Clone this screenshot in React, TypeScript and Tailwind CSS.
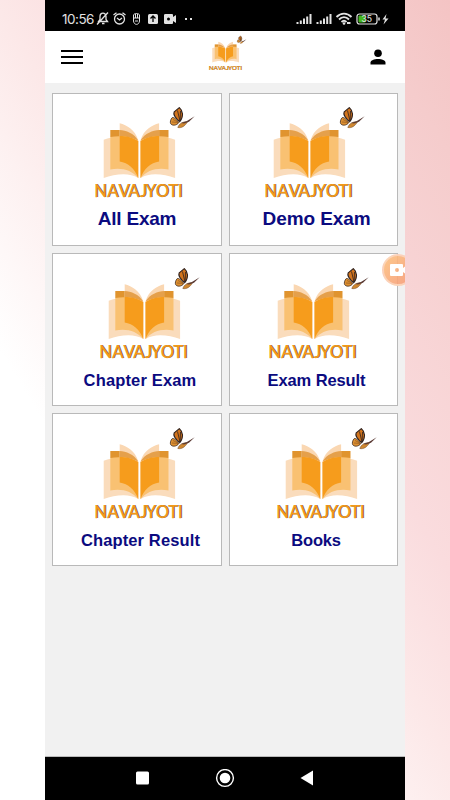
import clsx from "clsx";

type Exam = {
  label: string;
  // horizontal offset of the logo and text styling differ per tile
  logo: string;
  text: string;
};

const exams: Exam[] = [
  { label: "All Exam", logo: "ml-[42px] mt-[11px]", text: "ml-[44px] mt-[6px] text-[19px] w-[80px] tracking-[-0.2px]" },
  { label: "Demo Exam", logo: "ml-[35px] mt-[11px]", text: "ml-[33px] mt-[6px] text-[19px] w-[108px] tracking-[-0.1px]" },
  { label: "Chapter Exam", logo: "ml-[47px] mt-[12px]", text: "ml-[30px] mt-[6px] text-[16.5px] w-[114px] tracking-[0.15px]" },
  { label: "Exam Result", logo: "ml-[39px] mt-[12px]", text: "ml-[37px] mt-[6px] text-[16.5px] w-[100px] tracking-[-0.1px]" },
  { label: "Chapter Result", logo: "ml-[42px] mt-[12px]", text: "ml-[27px] mt-[6px] text-[16.5px] w-[121px] tracking-[0.12px]" },
  { label: "Books", logo: "ml-[47px] mt-[12px]", text: "ml-[61px] mt-[6px] text-[16.5px] w-[51px] tracking-[-0.2px]" },
];

function BookSide() {
  return (
    <>
      <path d="M24.700 18.300C32 20 40 25 43.200 35L43.200 73C40 64 32 57 24.700 56.700Z" fill="#fad7b2" />
      <path d="M8.700 34.700C18 31 33 30 43.200 36L43.200 73C34 67 20 69 8.700 73Z" fill="#fadcbc" />
      <path d="M15.300 25H24.700V32H15.300Z" fill="#e0942f" />
      <path d="M24.700 25C31 25.500 39 28 43.200 35.500C36 32 30 31 24.700 31.500Z" fill="#e5a04b" />
      <path d="M15.300 32C25 30 36 31.500 43.200 36V73C37 65 26 62 15.300 64.500Z" fill="#f9c172" />
      <path d="M24.700 31C31 31 37 32 43.200 36V73C40 64 33 57.500 24.700 56.500Z" fill="#f69c1c" />
    </>
  );
}

function Butterfly() {
  return (
    <g strokeLinejoin="round">
      <path
        d="M84.800 16.500C80 13 78.200 9 79.200 6.800L84.300 2.600L86.300 5L87.500 9C87.500 12 86.700 14.500 84.800 16.500Z"
        fill="#d2741c"
        stroke="#2d211f"
        strokeWidth="1.100"
      />
      <path d="M82.500 5.500L85 16M85.500 6L85.200 15" stroke="#2d211f" strokeWidth=".8" />
      <path
        d="M84 17.500C80.500 13 78 11.800 77 12.800C75.500 14.500 75 17.200 75.600 18.500C77 21 81.500 20.800 84 17.500Z"
        fill="#dd8f30"
        stroke="#3b2920"
        strokeWidth=".8"
      />
      <path d="M77 17L84 17.500M78 14.500L83 17" stroke="#6f431f" strokeWidth=".5" />
      <path d="M82.800 22.500C84 18.500 88 16.500 92.500 16.700C90.500 20.500 87 23.500 82.800 22.500Z" fill="#d08830" stroke="#6b4527" strokeWidth=".5" />
      <path d="M86 18L91.500 16.300L99.700 11.300L94 16.700L89 18.500Z" fill="#5a3a34" />
    </g>
  );
}

function Logo({ className }: { className?: string }) {
  // each letter of the wordmark is kerned by hand
  const letters = "-0.8 12.2 23.400 33.200 45 50.700 60.700 73.300 83";
  return (
    <svg viewBox="0 0 104 96" className={className}>
      <BookSide />
      <g transform="translate(88.8 0) scale(-1 1)">
        <BookSide />
      </g>
      <Butterfly />
      <g fontFamily="Lato, sans-serif" fontSize="16.5">
        <text x={letters} y="92.300" transform="translate(.8 0)" fill="#4d3a22">NAVAJYOTI</text>
        <text x={letters} y="92" fill="#f39a19" stroke="#f39a19" strokeWidth=".25">NAVAJYOTI</text>
      </g>
    </svg>
  );
}

function ExamCard({ label, logo, text }: Exam) {
  return (
    <button className="flex h-[153px] flex-col items-start border border-[#b9b9b9] bg-white">
      <Logo className={clsx("h-24 w-[104px] shrink-0 overflow-visible", logo)} />
      <span
        className={clsx(
          "flex h-6 items-center justify-center font-bold whitespace-nowrap text-[#0b0b80]",
          text,
        )}
      >
        {label}
      </span>
    </button>
  );
}

function StatusBar() {
  return (
    <div className="flex h-[31px] bg-black pt-[11px] text-[#e2e2e2]">
      <span className="ml-[17px] w-[34px] font-[Inter] text-[13.5px] leading-4 tracking-[-0.5px]">10:56</span>
      <svg width="102" height="16" fill="none" stroke="currentColor" strokeWidth="1.3">
        {/* muted bell */}
        <path d="M2.500 10.500H11.500L10 8.500V5.500C10 1 4 1 4 5.500V8.500ZM6 12.500H8.500M1 13.500L12 1.500" />
        {/* alarm */}
        <circle cx="23.500" cy="8" r="5" />
        <path d="M17.500 4L20.500 1.700M29.500 4L26.500 1.700M21 7L23.500 9L26 7" />
        {/* touch */}
        <path d="M37.500 7V4C38 2 43 2 43.500 4V10C43 14.500 38 14.500 37.500 10V7H43.500M39.500 3V7M41.500 3V7M39 10H42" strokeWidth="1" />
        <rect x="52" y="3" width="10" height="10" rx="1.500" fill="currentColor" stroke="none" />
        <path d="M57 11V5.500M54.500 7.500L57 5L59.500 7.500" stroke="#000" />
        <path d="M69.500 3H76Q77 3 77 4V6L80 4V12L77 10V12Q77 13 76 13H69.500Q68 13 68 12V4Q68 3 69.500 3" fill="currentColor" stroke="none" />
        <circle cx="72.500" cy="8" r="1.500" fill="#000" stroke="none" />
        <path d="M89 8H91M94 8H96" strokeWidth="2" />
      </svg>
      <svg width="95" height="16" className="ml-[98px]" fill="none" stroke="currentColor">
        <path d="M1.500 13V11M4.800 13V9.500M8 13V7.500M11.200 13V5.500M14.500 13V3" strokeWidth="2" />
        <path d="M21.500 13V11M24.800 13V9.500M28 13V7.500M31.200 13V5.500M34.500 13V3" strokeWidth="2" />
        <path d="M40.500 6C45 1.500 51 1.500 55.500 6M43 8.500C46 5.500 50 5.500 53 8.500M45.500 11C47 9.500 49 9.500 50.500 11" strokeWidth="1.900" />
        <circle cx="48" cy="12.500" r="1.300" fill="currentColor" stroke="none" />
        <path d="M51 12H54.500" strokeWidth="2" />
        <rect x="61" y="3" width="20" height="10" rx="2.500" strokeWidth="1.200" />
        <rect x="62.500" y="4.500" width="7" height="7" rx="1" fill="#43b71d" stroke="none" />
        <path d="M83 6.500V9.500" strokeWidth="1.500" />
        <text x="65.500" y="11" fontSize="8.500" fontFamily="Inter, sans-serif" fontWeight="500" fill="currentColor" stroke="none">35</text>
        <path d="M90.500 3L86.500 8.500H89L87.500 13.500L92.500 7.500H89.500Z" fill="currentColor" stroke="none" />
      </svg>
    </div>
  );
}

function Header() {
  return (
    <header className="flex h-[52px] items-start bg-white">
      <div className="mt-[19px] ml-4 flex w-[22px] flex-col gap-1">
        <div className="h-0.5 bg-black" />
        <div className="h-0.5 bg-black" />
        <div className="h-0.5 bg-black" />
      </div>
      <Logo className="mt-1 ml-[126px] h-9 w-[39px] overflow-visible" />
      <svg width="16" height="16" viewBox="0 0 16 16" className="mt-[18px] ml-[122px]">
        <circle cx="8" cy="4.300" r="3.800" />
        <path d="M.5 15.500V13.500C.5 8.800 15.500 8.800 15.500 13.500V15.500Z" />
      </svg>
    </header>
  );
}

export default function App() {
  return (
    <div className="h-[800px] w-[450px] overflow-hidden bg-[linear-gradient(59deg,#fff_0%,#fff_29%,#fce8e8_51%,#fadcde_63%,#f5cccc_90%,#f4c4c4_100%)] px-[45px] font-['Liberation_Sans',sans-serif]">
      <div className="relative flex h-full flex-col overflow-hidden bg-[#f1f1f1]">
        <StatusBar />
        <Header />
        <main className="grid flex-1 auto-rows-max grid-cols-2 gap-[7px] border-b border-[#bbb] px-[7px] pt-2.5">
          {exams.map((exam) => (
            <ExamCard key={exam.label} {...exam} />
          ))}
        </main>

        {/* Floating recorder button */}
        <div className="absolute top-[254px] left-[337px] size-8 rounded-full border-2 border-[#fbd9c5]/80 bg-linear-to-br from-[#fdc27f]/90 to-[#f69a78]/90">
          <svg width="20" height="12" className="mt-2 ml-1.5" fill="#fff">
            <path d="M1 0H12Q13 0 13 1V4L17 1V11L13 8V11Q13 12 12 12H1Q0 12 0 11V1Q0 0 1 0ZM9 6A2 2 0 1 0 5 6A2 2 0 1 0 9 6" fillRule="evenodd" />
          </svg>
        </div>

        <nav className="flex h-[43px] items-center justify-center bg-black">
          <svg width="180" height="20" fill="#fff">
            <rect x="1" y="2.500" width="13" height="13" rx="1.500" />
            <circle cx="90" cy="9" r="8.400" fill="none" stroke="#fff" strokeWidth="1.400" />
            <circle cx="90" cy="9" r="5.300" />
            <path d="M165.500 9L178 1.500V16.500Z" />
          </svg>
        </nav>
      </div>
    </div>
  );
}
